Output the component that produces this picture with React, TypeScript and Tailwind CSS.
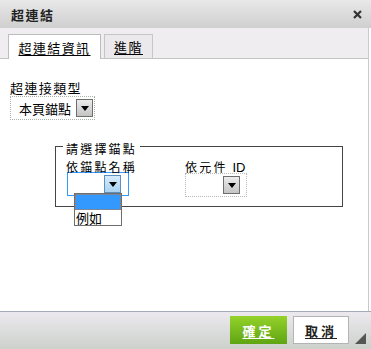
import React from "react";

const font = { fontFamily: '"Noto Sans CJK TC", "Noto Sans", sans-serif' };

function Arrow({ blue = false }: { blue?: boolean }) {
  return (
    <div
      className={
        "w-[17px] h-[18px] flex items-center justify-center border " +
        (blue
          ? "border-[#5a8fbf] bg-gradient-to-b from-[#d8ecfb] to-[#a9d2f2]"
          : "border-[#6e6e6e] bg-gradient-to-b from-[#ececec] to-[#c4c4c4]")
      }
    >
      <svg width="8" height="5" viewBox="0 0 8 5">
        <polygon points="0,0 8,0 4,5" fill="#000" />
      </svg>
    </div>
  );
}

export default function App() {
  return (
    <div
      className="w-[371px] h-[349px] flex flex-col bg-white text-[13px] text-black overflow-hidden"
      style={font}
    >
      {/* Title bar */}
      <div className="h-[28px] shrink-0 flex items-center justify-between pl-[11px] pr-[9px] bg-gradient-to-b from-[#e8e8e8] to-[#cfcfcf]">
        <span className="font-bold text-[13px] tracking-[1.5px] text-[#222] leading-none">超連結</span>
        <svg width="9" height="9" viewBox="0 0 9 9">
          <path d="M1 1 L8 8 M8 1 L1 8" stroke="#333" strokeWidth="2.2" />
        </svg>
      </div>

      {/* Tabs */}
      <div className="h-[31px] shrink-0 flex items-end pl-[8px] gap-[3px] bg-[#efedef] border-b border-[#c4c4c4] border-r border-r-[#c8c8c8] w-[369px]">
        <div className="w-[93px] h-[25px] -mb-px bg-white border border-b-0 border-[#bdbdbd] flex items-center justify-center">
          <span className="underline underline-offset-2 tracking-[1.4px] leading-none">超連結資訊</span>
        </div>
        <div className="w-[49px] h-[24px] bg-[#ebe9eb] border border-b-0 border-[#c6c6c6] flex items-center justify-center">
          <span className="underline underline-offset-2 tracking-[1.4px] leading-none">進階</span>
        </div>
      </div>

      {/* Content */}
      <div className="flex-1 w-[369px] border-r border-[#c8c8c8] pl-[10px] pt-[21px]">
        <div className="leading-[15px] tracking-[1.4px]">超連接類型</div>
        <div className="mt-[1px] w-[85px] h-[24px] border border-dotted border-[#a9b4a9] flex items-center pl-[8px] gap-[5px]">
          <span className="leading-none">本頁錨點</span>
          <Arrow />
        </div>

        {/* Fieldset */}
        <div className="relative ml-[45px] mt-[26px] w-[288px] h-[61px] border border-[#444]">
          <div className="absolute left-[7px] -top-[4px] px-[3px] bg-white text-[12px] leading-[12px] tracking-[2.2px]">
            請選擇錨點
          </div>
          <div className="flex pt-[14px] pl-[10px]">
            <div className="w-[119px]">
              <div className="text-[12px] leading-[11px] tracking-[2.2px]">依錨點名稱</div>
              <div className="ml-[1px] w-[62px] h-[24px] border border-[#3399ff] flex items-center justify-end pr-[7px]">
                <Arrow blue />
              </div>
            </div>
            <div>
              <div className="text-[12px] leading-[11px] tracking-[2.2px]">
                依元件 <span className="tracking-normal text-[13px]" style={{ fontFamily: '"Liberation Sans", sans-serif' }}>ID</span>
              </div>
              <div className="w-[62px] h-[24px] border border-dotted border-[#b8b8b8] flex items-center justify-end pr-[6px]">
                <Arrow />
              </div>
            </div>
          </div>

          {/* Open dropdown */}
          <div className="absolute left-[18px] top-[46px] w-[48px] border border-[#6e6e6e] bg-white">
            <div className="h-[16px] bg-[#3399ff] border border-dotted border-[#c0743a]" />
            <div className="h-[15px] leading-[15px] pl-[1px]">例如</div>
          </div>
        </div>
      </div>

      {/* Footer */}
      <div className="h-[38px] shrink-0 border-t border-[#a3abb6] bg-gradient-to-b from-[#ece9ee] to-[#ccd1cb] flex items-start pt-[4px] pl-[230px]">
        <div className="w-[57px] h-[28px] bg-gradient-to-b from-[#94d22a] to-[#5fa513] flex items-center justify-center">
          <span className="text-white font-bold underline underline-offset-2 tracking-[3px] leading-none">確定</span>
        </div>
        <div className="ml-[6px] w-[56px] h-[28px] bg-white border border-[#b4b4b4] flex items-center justify-center">
          <span className="text-[#222] font-bold underline underline-offset-2 tracking-[3px] leading-none">取消</span>
        </div>
        <svg className="ml-[6px] mt-[17px]" width="11" height="11" viewBox="0 0 11 11">
          <polygon points="11,0 11,11 0,11" fill="#555" />
        </svg>
      </div>
    </div>
  );
}
